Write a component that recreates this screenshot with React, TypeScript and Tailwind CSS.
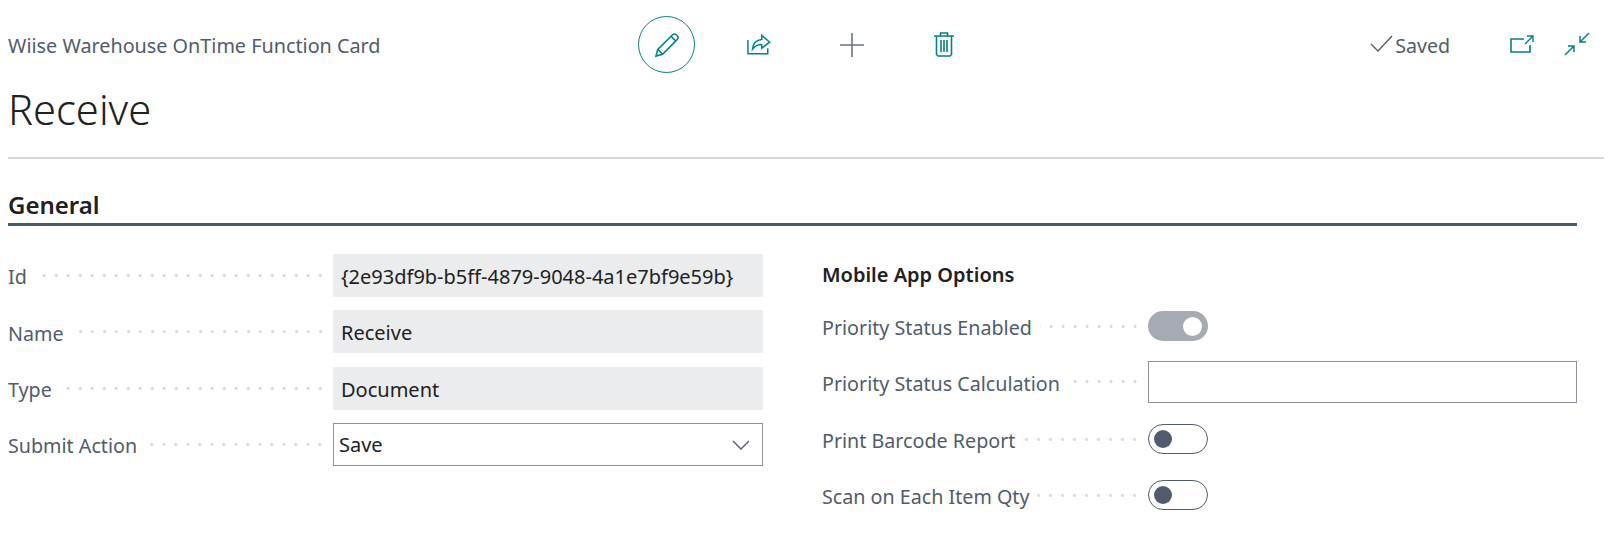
const font = "font-['Noto_Sans','Open_Sans',sans-serif]";

const Leader = () => (
  <div className="mr-[5px] ml-2 h-[3px] flex-1 bg-[radial-gradient(circle,#d4d6d9_1.4px,transparent_1.6px)] bg-[length:12px_3px] bg-[position:right_center] bg-repeat-x" />
);

const Field = ({ label, children, width }: { label: string; children: React.ReactNode; width: string }) => (
  <div className={`flex items-center ${width}`}>
    <div className="flex min-w-0 flex-1 items-center pr-[2px]">
      <span className="pt-[3px] text-[19.7px] whitespace-nowrap text-[#505c6d]">{label}</span>
      <Leader />
    </div>
    {children}
  </div>
);

const ReadOnly = ({ value }: { value: string }) => (
  <div className="flex h-[43px] w-[430px] items-center bg-[#ebecee] pt-[3px] pl-[8px] text-[20px] whitespace-nowrap text-[#212121]">
    {value}
  </div>
);

const Toggle = ({ on }: { on?: boolean }) =>
  on ? (
    <div className="flex h-[30px] w-[60px] items-center justify-end rounded-full bg-[#a5aab3] pr-[6px]">
      <div className="h-[19px] w-[19px] rounded-full bg-white" />
    </div>
  ) : (
    <div className="flex h-[30px] w-[60px] items-center rounded-full border border-[#505c6d] bg-white pl-[5px]">
      <div className="h-[18px] w-[18px] rounded-full bg-[#505c6d]" />
    </div>
  );

const PencilIcon = () => (
  <svg width="26" height="26" viewBox="0 0 26 26" fill="none" stroke="#00838a" strokeWidth="1.6">
    <path d="M2 24l1.8-6.6L18.6 2.7a2.6 2.6 0 0 1 3.7 0l1 1a2.6 2.6 0 0 1 0 3.7L8.6 22.2z" />
    <path d="M3.8 17.4l4.8 4.8M17 4.3l4.8 4.8" />
  </svg>
);

const ShareIcon = () => (
  <svg width="24" height="21" viewBox="0 0 26 22" fill="none" stroke="#00838a" strokeWidth="1.6">
    <path d="M1 6v15h21.5v-6" />
    <path d="M16 1l8.5 7.5-8.5 6.5v-4c-4.500 0-7.500 1.500-10 5 .5-6 4-10 10-10.500z" />
  </svg>
);

const TrashIcon = () => (
  <svg width="20" height="25" viewBox="0 0 20 25" fill="none" stroke="#00838a" strokeWidth="1.6">
    <path d="M0 4h20M6.500 4V1h7v3M2.500 4v18.500l1.500 1.500h12l1.500-1.500V4" />
    <path d="M7 8v12M10 8v12M13 8v12" />
  </svg>
);

const OpenIcon = () => (
  <svg width="24" height="18" viewBox="0 0 24 18" fill="none" stroke="#00838a" strokeWidth="1.6">
    <path d="M14 4H1v13h19v-7" />
    <path d="M15 9l8-8M17 1h6v6" strokeWidth="1.4" />
  </svg>
);

const CollapseIcon = () => (
  <svg width="26" height="24" viewBox="0 0 26 24" fill="none" stroke="#00838a" strokeWidth="1.5">
    <path d="M25 1l-9 9M16 4v6h6" />
    <path d="M1 23l9-9M4 14h6v6" />
  </svg>
);

export default function App() {
  return (
    <div className={`h-[541px] w-[1624px] overflow-hidden bg-white px-2 ${font}`}>
      <div className="mt-4 flex h-[57px] items-center">
        <div className="mt-[2px] w-[630px] text-[19.8px] whitespace-nowrap text-[#505c6d]">Wiise Warehouse OnTime Function Card</div>
        <div className="flex items-center">
          <div className="flex h-[57px] w-[57px] items-center justify-center rounded-full border border-[#00838a]">
            <PencilIcon />
          </div>
          <div className="ml-[52px]"><ShareIcon /></div>
          <svg className="ml-[68px]" width="26" height="26" viewBox="0 0 26 26" stroke="#6b7280" strokeWidth="1.6">
            <path d="M13 1v24M1 13h24" />
          </svg>
          <div className="ml-[69px]"><TrashIcon /></div>
        </div>
        <div className="ml-auto flex items-center pr-[26px]">
          <svg width="23" height="18" viewBox="0 0 23 18" fill="none" stroke="#505c6d" strokeWidth="1.4">
            <path d="M1 9l7 7L22 1" />
          </svg>
          <span className="mt-[2px] ml-[2px] text-[19.6px] text-[#505c6d]">Saved</span>
          <div className="ml-[60px]"><OpenIcon /></div>
          <div className="ml-[30px]"><CollapseIcon /></div>
        </div>
      </div>
      <h1 className="mt-[13px] text-[41.7px] leading-[46px] font-light text-[#212121]">Receive</h1>
      <div className="mt-[25px] mr-3 h-[2px] bg-[#d4d6d9]" />
      <div className="mr-[39px]">
        <h2 className="mt-[30px] text-[24px] leading-[32px] font-semibold text-[#212121]">General</h2>
        <div className="mt-[2px] h-[3px] bg-[#455a68]" />
        <div className="mt-[28px] flex justify-between">
          <div className="flex w-[755px] flex-col gap-[13.300px]">
            <Field label="Id" width="w-full"><ReadOnly value="{2e93df9b-b5ff-4879-9048-4a1e7bf9e59b}" /></Field>
            <Field label="Name" width="w-full"><ReadOnly value="Receive" /></Field>
            <Field label="Type" width="w-full"><ReadOnly value="Document" /></Field>
            <Field label="Submit Action" width="w-full">
              <div className="flex h-[43px] w-[430px] items-center justify-between border border-[#8a919c] pt-[2px] pr-[12px] pl-[5px] text-[20px] text-[#212121]">
                Save
                <svg width="18" height="11" viewBox="0 0 18 11" fill="none" stroke="#505c6d" strokeWidth="1.3">
                  <path d="M1 1l8 8 8-8" />
                </svg>
              </div>
            </Field>
          </div>
          <div className="w-[755px]">
            <div className="flex h-[41px] items-center text-[20px] font-semibold text-[#212121]">Mobile App Options</div>
            <div className="mt-[16px] flex flex-col">
              <Field label="Priority Status Enabled" width="h-[30px] w-full"><div className="w-[429px]"><Toggle on /></div></Field>
              <div className="mt-[20px]">
                <Field label="Priority Status Calculation" width="h-[42px] w-full">
                  <div className="h-[42px] w-[429px] border border-[#8a919c]" />
                </Field>
              </div>
              <div className="mt-[21px]">
                <Field label="Print Barcode Report" width="h-[30px] w-full"><div className="w-[429px]"><Toggle /></div></Field>
              </div>
              <div className="mt-[26px]">
                <Field label="Scan on Each Item Qty" width="h-[30px] w-full"><div className="w-[429px]"><Toggle /></div></Field>
              </div>
            </div>
          </div>
        </div>
      </div>
    </div>
  );
}
